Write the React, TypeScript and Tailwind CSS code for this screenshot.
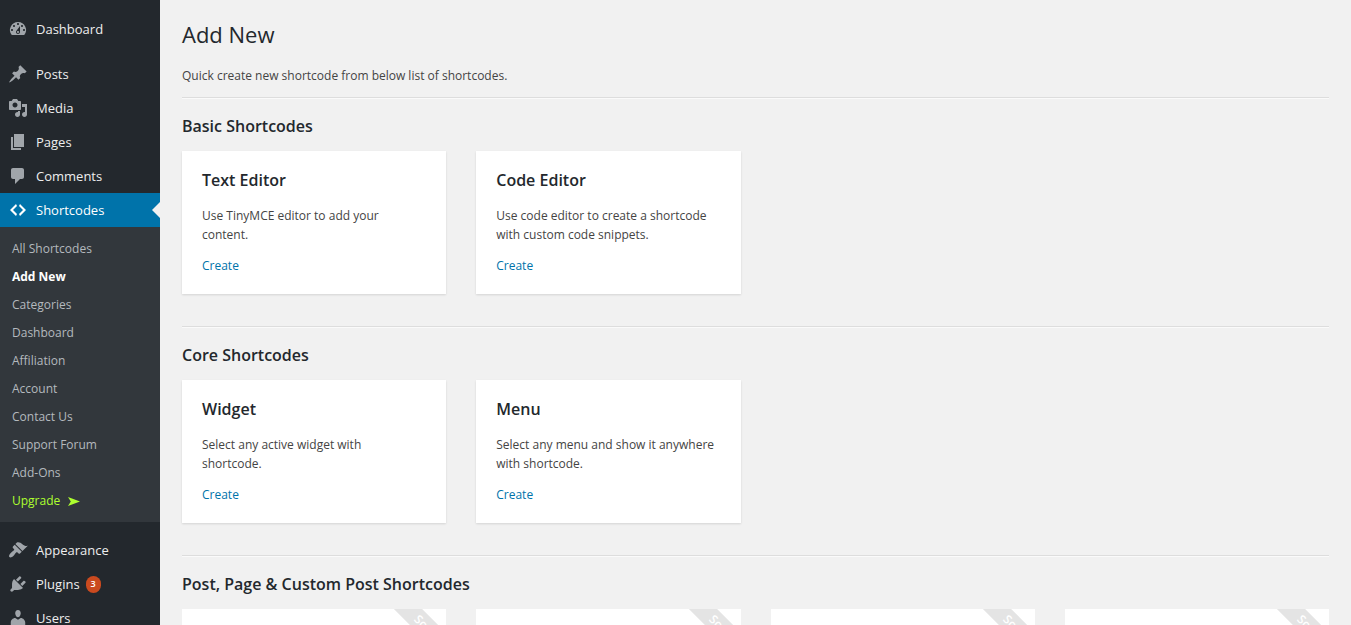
import React from "react";

type MenuEntry = { label: string; path: string; badge?: number; gap?: boolean; active?: boolean };

const PATHS = {
  dashboard:
    "M3.76 16h12.48A7.998 7.998 0 0 0 10 3a7.998 7.998 0 0 0-6.24 13zM10 4c.55 0 1 .45 1 1s-.45 1-1 1-1-.45-1-1 .45-1 1-1zM6 6c.55 0 1 .45 1 1s-.45 1-1 1-1-.45-1-1 .45-1 1-1zm8 0c.55 0 1 .45 1 1s-.45 1-1 1-1-.45-1-1 .45-1 1-1zm-5.37 5.55L12 7v6c0 1.1-.9 2-2 2s-2-.9-2-2c0-.57.24-1.08.63-1.45zM4 10c.55 0 1 .45 1 1s-.45 1-1 1-1-.45-1-1 .45-1 1-1zm12 0c.55 0 1 .45 1 1s-.45 1-1 1-1-.45-1-1 .45-1 1-1zm-5 3c0-.55-.45-1-1-1s-1 .45-1 1 .45 1 1 1 1-.45 1-1z",
  posts:
    "M10.44 3.02l1.82-1.82 6.36 6.35-1.83 1.82c-1.05-.68-2.48-.57-3.41.36l-.75.75c-.92.93-1.04 2.35-.35 3.41l-1.83 1.82-2.41-2.41-2.8 2.79c-.42.42-3.38 2.71-3.8 2.29s1.86-3.39 2.28-3.81l2.79-2.79L4.1 9.36l1.83-1.82c1.05.69 2.48.57 3.4-.36l.75-.75c.93-.92 1.05-2.35.36-3.41z",
  media:
    "M13 11V4c0-.55-.45-1-1-1h-1.67L9 1H5L3.67 3H2c-.55 0-1 .45-1 1v7c0 .55.45 1 1 1h10c.55 0 1-.45 1-1zM7 4.5c1.38 0 2.5 1.12 2.5 2.5S8.38 9.5 7 9.5 4.5 8.38 4.5 7 5.62 4.5 7 4.5zM14 6h5v10.5c0 1.38-1.12 2.5-2.5 2.5S14 17.88 14 16.5s1.12-2.5 2.5-2.5c.17 0 .34.02.5.05V9h-3V6zm-4 8.05V13h2v3.5c0 1.38-1.12 2.5-2.5 2.5S7 17.88 7 16.5 8.12 14 9.5 14c.17 0 .34.02.5.05z",
  pages: "M6 15V2h10v13H6zm-1 1h8v2H3V5h2v11z",
  comments:
    "M5 2h9c1.1 0 2 .9 2 2v7c0 1.1-.9 2-2 2h-2l-5 5v-5H5c-1.1 0-2-.9-2-2V4c0-1.1.9-2 2-2z",
  code: "M9 6l-4 4 4 4-1 2-6-6 6-6zm2 8l4-4-4-4 1-2 6 6-6 6z",
  appearance:
    "M14.48 11.06L7.41 3.99l1.5-1.5c.5-.56 2.3-.47 3.51.32 1.21.8 1.43 1.28 2.91 2.1 1.18.64 2.45 1.26 4.45.85zm-.71.71L6.7 4.7 4.93 6.47c-.39.39-.39 1.02 0 1.41l1.06 1.06c.39.39.39 1.03 0 1.42-.6.6-1.43 1.11-2.21 1.69-.35.26-.7.53-1.01.84C1.43 14.23.4 16.08 1.4 17.07c.99 1 2.84-.03 4.18-1.36.31-.31.58-.66.85-1.02.57-.78 1.08-1.61 1.69-2.21.39-.39 1.02-.39 1.41 0l1.06 1.06c.39.39 1.02.39 1.41 0z",
  plugins:
    "M13.11 4.36L9.87 7.6 8 5.73l3.24-3.24c.35-.34 1.05-.2 1.56.32.52.51.66 1.21.31 1.55zm-8 1.77l.91-1.12 9.01 9.01-1.19.84c-.71.71-2.63 1.16-3.82 1.16H6.14L4.9 17.26c-.59.59-1.54.59-2.12 0-.59-.58-.59-1.53 0-2.12l1.24-1.24v-3.88c0-1.13.4-3.19 1.09-3.89zm7.26 3.97l3.24-3.24c.34-.35 1.04-.21 1.55.31.52.51.66 1.21.31 1.55l-3.24 3.25z",
  users:
    "M10 9.25c-2.27 0-2.73-3.44-2.73-3.44C7 4.02 7.82 2 9.97 2c2.16 0 2.98 2.02 2.71 3.81 0 0-.41 3.44-2.68 3.44zm0 2.57L12.72 10c2.39 0 4.52 2.33 4.52 4.53v2.49s-3.65 1.13-7.24 1.13c-3.65 0-7.24-1.13-7.24-1.13v-2.49c0-2.25 1.94-4.48 4.47-4.48z",
};

const MENU: MenuEntry[] = [
  { label: "Dashboard", path: PATHS.dashboard },
  { label: "Posts", path: PATHS.posts, gap: true },
  { label: "Media", path: PATHS.media },
  { label: "Pages", path: PATHS.pages },
  { label: "Comments", path: PATHS.comments },
  { label: "Shortcodes", path: PATHS.code, active: true },
  { label: "Appearance", path: PATHS.appearance, gap: true },
  { label: "Plugins", path: PATHS.plugins, badge: 3 },
  { label: "Users", path: PATHS.users },
];

const SUBMENU = [
  "All Shortcodes",
  "Add New",
  "Categories",
  "Dashboard",
  "Affiliation",
  "Account",
  "Contact Us",
  "Support Forum",
  "Add-Ons",
];

const SECTIONS = [
  {
    title: "Basic Shortcodes",
    cards: [
      { title: "Text Editor", text: "Use TinyMCE editor to add your content." },
      { title: "Code Editor", text: "Use code editor to create a shortcode with custom code snippets." },
    ],
  },
  {
    title: "Core Shortcodes",
    cards: [
      { title: "Widget", text: "Select any active widget with shortcode." },
      { title: "Menu", text: "Select any menu and show it anywhere with shortcode." },
    ],
  },
];

function Submenu() {
  return (
    <ul className="bg-[#32373c] pt-2 pb-[7px] text-xs text-[#b4b9be]">
      {SUBMENU.map((label) => (
        <li key={label}>
          <a href="#" className={label === "Add New" ? "block px-3 leading-7 font-bold text-white" : "block px-3 leading-7"}>
            {label}
          </a>
        </li>
      ))}
      <li>
        <a href="#" className="flex items-center gap-2 px-3 leading-7 text-[#adff2f]">
          Upgrade
          <svg viewBox="0 0 12 9" className="h-[9px] w-3 fill-current" aria-hidden="true">
            <path d="M0 0 12 4.5 0 9 2.8 4.5z" />
          </svg>
        </a>
      </li>
    </ul>
  );
}

function Sidebar() {
  return (
    <nav className="w-40 shrink-0 bg-[#23282d] pt-3">
      <ul>
        {MENU.map((m) => (
          <li key={m.label} className={m.gap ? "mt-[11px]" : ""}>
            <a
              href="#"
              className={
                m.active
                  ? "relative flex h-[34px] items-center gap-2 bg-[#0073aa] px-2 text-[13px] leading-5 text-white"
                  : "flex h-[34px] items-center gap-2 px-2 text-[13px] leading-5 text-[#eee]"
              }
            >
              <svg
                viewBox="0 0 20 20"
                className={m.active ? "size-5 fill-white" : "size-5 fill-[#a0a5aa]"}
                aria-hidden="true"
              >
                <path d={m.path} />
              </svg>
              <span>{m.label}</span>
              {m.badge && (
                <span className="-ml-0.5 flex h-[17px] w-[15px] items-center justify-center rounded-full bg-[#ca4a1f] text-[9px] font-semibold text-white">
                  {m.badge}
                </span>
              )}
              {m.active && (
                <span className="absolute right-0 top-1/2 -mt-2 border-8 border-transparent border-r-[#f1f1f1]" />
              )}
            </a>
            {m.active && <Submenu />}
          </li>
        ))}
      </ul>
    </nav>
  );
}

function Card({ title, text }: { title: string; text: string }) {
  return (
    <article className="bg-white px-5 pt-[17px] pb-[19px] shadow-[0_1px_2px_rgba(0,0,0,0.12)]">
      <h3 className="text-base leading-6 font-semibold text-[#23282d]">{title}</h3>
      <p className="mt-3.5 pr-1 text-xs leading-[19px]">{text}</p>
      <a href="#" className="mt-3 block text-xs leading-[19px] text-[#0073aa]">
        Create
      </a>
    </article>
  );
}

function SectionTitle({ children }: { children: React.ReactNode }) {
  return (
    <>
      <hr className="h-[2px] border-t border-b border-t-[#ddd] border-b-[#fafafa]" />
      <h2 className="mt-[15px] mb-[13px] text-base leading-6 font-semibold text-[#23282d]">{children}</h2>
    </>
  );
}

export default function App() {
  return (
    <div className="flex h-screen overflow-hidden bg-[#f1f1f1] font-['Open_Sans','Noto_Sans',sans-serif] text-[#444]">
      <Sidebar />
      <main className="min-w-0 flex-1 px-[22px] pt-[19px]">
        <h1 className="text-[22px] leading-[30px] text-[#23282d]">Add New</h1>
        <p className="mt-[17px] mb-3 text-xs leading-[19px]">Quick create new shortcode from below list of shortcodes.</p>
        {SECTIONS.map((s) => (
          <section key={s.title} className="mb-8">
            <SectionTitle>{s.title}</SectionTitle>
            <div className="grid grid-cols-4 gap-[30px]">
              {s.cards.map((c) => (
                <Card key={c.title} {...c} />
              ))}
            </div>
          </section>
        ))}
        <section>
          <SectionTitle>Post, Page &amp; Custom Post Shortcodes</SectionTitle>
          <div className="grid grid-cols-4 gap-[30px]">
            {[1, 2, 3, 4].map((n) => (
              <article key={n} className="relative h-36 overflow-hidden bg-white">
                <span className="absolute top-[18px] -right-[50px] w-[120px] rotate-45 bg-[#e4e4e4] pl-8 text-left text-xs leading-5 font-semibold text-white">
                  Soon
                </span>
              </article>
            ))}
          </div>
        </section>
      </main>
    </div>
  );
}
